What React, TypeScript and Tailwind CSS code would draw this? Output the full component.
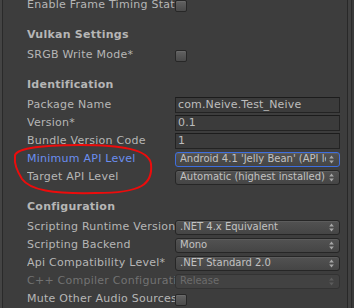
import type { ReactNode } from 'react'

type Control =
  | { kind: 'check' }
  | { kind: 'text'; value: string }
  | { kind: 'drop'; value: string; focused?: boolean; disabled?: boolean }

type Row = { label: string; tone?: 'blue' | 'dim'; control: Control }

const sections: { title?: string; rows: Row[] }[] = [
  { rows: [{ label: 'Enable Frame Timing Stats', control: { kind: 'check' } }] },
  { title: 'Vulkan Settings', rows: [{ label: 'SRGB Write Mode*', control: { kind: 'check' } }] },
  {
    title: 'Identification',
    rows: [
      { label: 'Package Name', control: { kind: 'text', value: 'com.Neive.Test_Neive' } },
      { label: 'Version*', control: { kind: 'text', value: '0.1' } },
      { label: 'Bundle Version Code', control: { kind: 'text', value: '1' } },
      {
        label: 'Minimum API Level',
        tone: 'blue',
        control: { kind: 'drop', value: "Android 4.1 'Jelly Bean' (API level 16)", focused: true },
      },
      { label: 'Target API Level', control: { kind: 'drop', value: 'Automatic (highest installed)' } },
    ],
  },
  {
    title: 'Configuration',
    rows: [
      { label: 'Scripting Runtime Version', control: { kind: 'drop', value: '.NET 4.x Equivalent' } },
      { label: 'Scripting Backend', control: { kind: 'drop', value: 'Mono' } },
      { label: 'Api Compatibility Level*', control: { kind: 'drop', value: '.NET Standard 2.0' } },
      {
        label: 'C++ Compiler Configuration',
        tone: 'dim',
        control: { kind: 'drop', value: 'Release', disabled: true },
      },
      { label: 'Mute Other Audio Sources*', control: { kind: 'check' } },
    ],
  },
]

function Arrows({ dim }: { dim?: boolean }) {
  const c = dim ? '#5c5c5c' : '#a8a8a8'
  return (
    <svg width="5" height="9" viewBox="0 0 5 9" className="shrink-0">
      <path d="M2.5 0.5 L4.8 3.5 L0.2 3.5 Z" fill={c} />
      <path d="M2.5 8.5 L4.8 5.5 L0.2 5.5 Z" fill={c} />
    </svg>
  )
}

function Checkbox() {
  return (
    <div className="mt-[2px] h-[12px] w-[12px] rounded-[2px] border border-[#272727] bg-linear-to-b from-[#626262] to-[#4a4a4a] shadow-[inset_0_1px_0_#6a6a6a]" />
  )
}

function TextField({ value }: { value: string }) {
  return (
    <div className="flex h-[16px] w-[165px] items-center overflow-hidden whitespace-nowrap border border-[#232323] border-t-[#1c1c1c] bg-[#3b3b3b] pl-[2px] tracking-[0.15px] text-[#bdbdbd]">
      {value}
    </div>
  )
}

function Dropdown({ value, focused, disabled }: { value: string; focused?: boolean; disabled?: boolean }) {
  const border = focused ? 'border-[#3e6ede]' : disabled ? 'border-[#333333]' : 'border-[#262626]'
  const fill = disabled
    ? 'bg-[#424242] text-[#6c6c6c]'
    : 'bg-linear-to-b from-[#525252] to-[#454545] text-[#c2c2c2] shadow-[inset_0_1px_0_#5c5c5c]'
  return (
    <div
      className={`flex h-[15px] w-[165px] items-center gap-[3px] rounded-[3px] border pl-[4px] pr-[5px] text-[10px] ${border} ${fill}`}
    >
      <span className="flex-1 overflow-hidden whitespace-nowrap">{value}</span>
      <Arrows dim={disabled} />
    </div>
  )
}

function Field({ row }: { row: Row }) {
  const tone =
    row.tone === 'blue' ? 'text-[#6b8ef0]' : row.tone === 'dim' ? 'text-[#727272]' : 'text-[#b6b6b6]'
  let control: ReactNode
  if (row.control.kind === 'check') control = <Checkbox />
  else if (row.control.kind === 'text') control = <TextField value={row.control.value} />
  else control = <Dropdown {...row.control} />
  return (
    <div className="flex h-[18px] items-center">
      <div className={`w-[148px] shrink-0 overflow-hidden whitespace-nowrap tracking-[0.25px] ${tone}`}>
        {row.label}
      </div>
      {control}
    </div>
  )
}

export default function App() {
  return (
    <div className="relative flex h-[308px] w-[354px] overflow-hidden bg-[#3d3d3d] font-['DejaVu_Sans',sans-serif] text-[11px] leading-[16px]">
      <div className="w-[2px] bg-[#444444]" />
      <div className="w-[1px] bg-[#2a2a2a]" />

      <div className="mt-[-4px] flex-1 pl-[24px] pr-[7px]">
        {sections.map((s, i) => (
          <div key={i}>
            {s.title && (
              <div className="h-[32px] pt-[13px] font-bold tracking-[0.25px] text-[#b6b6b6]">{s.title}</div>
            )}
            {s.rows.map((r) => (
              <Field key={r.label} row={r} />
            ))}
          </div>
        ))}
      </div>

      <div className="w-[1px] bg-[#282828]" />
      <div className="w-[3px] bg-[#414141]" />
      <div className="w-[1px] bg-[#2a2a2a]" />
      <div className="w-[2px] bg-[#3a3a3a]" />

      {/* hand-drawn red ring over the API level rows */}
      <svg className="pointer-events-none absolute inset-0" width="354" height="308" viewBox="0 0 354 308">
        <path
          d="M15 157 C13 149 38 145 80 145 C120 145 149 149 151 164 C153 184 142 193 96 193 C52 194 30 190 22 179 C17 171 14 164 15 157"
          fill="none"
          stroke="#ec0c0c"
          strokeWidth="2"
          strokeLinecap="round"
        />
      </svg>
    </div>
  )
}
